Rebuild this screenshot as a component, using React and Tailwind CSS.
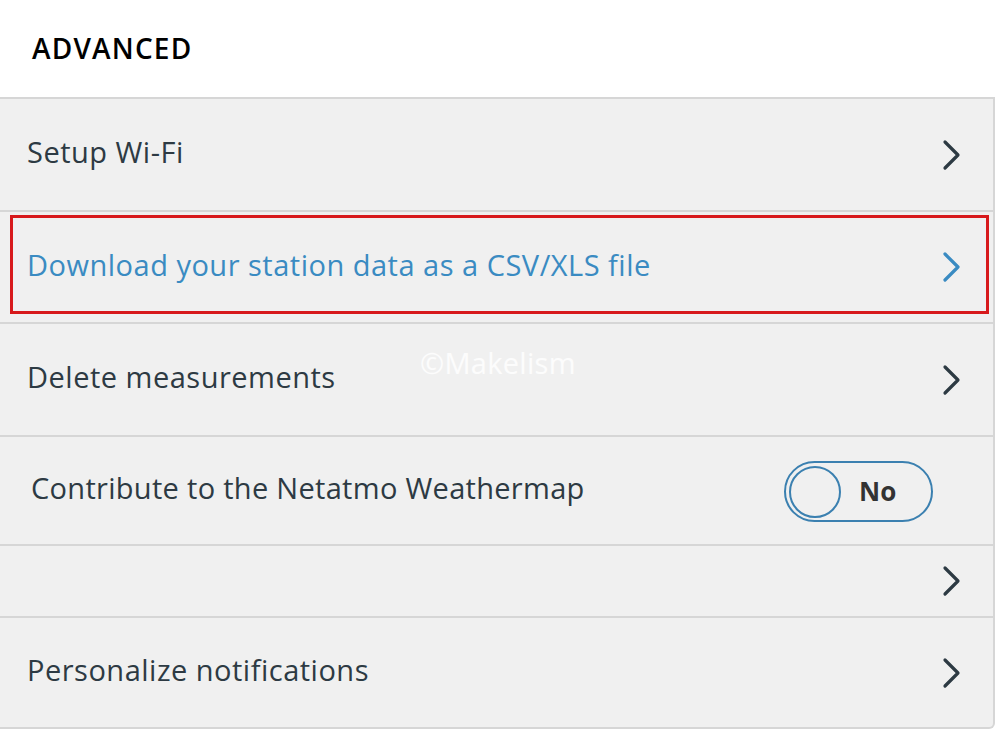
import React from "react";

const font = { fontFamily: "'Open Sans', 'Noto Sans', sans-serif" };

function Chevron({ color }) {
  return (
    <svg width="20" height="32" viewBox="0 0 20 32" className="shrink-0">
      <polyline points="3,3 16,16 3,29" fill="none" stroke={color} strokeWidth="3.2" strokeLinecap="round" strokeLinejoin="round" />
    </svg>
  );
}

function Row({ h, label, color = "text-[#2d3a43]", children, pl = "pl-[27px]" }) {
  return (
    <div className={`relative flex items-center justify-between border-b-2 border-[#d6d6d6] ${pl} pr-[31px] ${h}`}>
      <span className={`text-[29px] leading-none mb-[6px] tracking-[0.5px] ${color}`}>{label}</span>
      {children}
    </div>
  );
}

export default function App() {
  return (
    <div className="w-[996px] h-[730px] bg-white overflow-hidden" style={font}>
      <div className="h-[97px] flex items-center pl-[32px] pb-[2px]">
        <span className="text-[28px] font-semibold text-black tracking-[1.2px]">ADVANCED</span>
      </div>
      <div className="w-[995px] bg-[#f0f0f0] border-t-2 border-r-2 border-b-2 border-[#d6d6d6] rounded-br-[6px] relative">
        <Row h="h-[113px]" label="Setup Wi-Fi">
          <Chevron color="#2d3a43" />
        </Row>
        <Row h="h-[112px]" label="Download your station data as a CSV/XLS file" color="text-[#3a8bc2]">
          <Chevron color="#3a8bc2" />
          <div className="absolute left-[10px] top-[3px] w-[979px] h-[99px] border-[3px] border-[#d7191c] pointer-events-none" />
        </Row>
        <Row h="h-[113px]" label="Delete measurements">
          <Chevron color="#2d3a43" />
          <span className="absolute left-[420px] top-[17px] text-[29px] tracking-[0.3px] text-white/80" style={{ fontFamily: "'Open Sans', sans-serif" }}>©Makelism</span>
        </Row>
        <div className="flex items-center justify-between border-b-2 border-[#d6d6d6] pl-[31px] pr-[60px] h-[109px]">
          <span className="text-[29px] leading-none mb-[6px] tracking-[0.3px] text-[#2d3a43]">Contribute to the Netatmo Weathermap</span>
          <div className="w-[149px] h-[61px] rounded-full border-2 border-[#3b80b0] flex items-center pl-[3px] mt-[2px]">
            <div className="w-[52px] h-[52px] rounded-full border-2 border-[#3b80b0] bg-[#f0f0f0]" />
            <span className="ml-[18px] text-[26px] font-bold text-[#333]">No</span>
          </div>
        </div>
        <div className="flex items-center justify-end border-b-2 border-[#d6d6d6] pr-[31px] h-[72px]">
          <Chevron color="#2d3a43" />
        </div>
        <div className="flex items-center justify-between pl-[27px] pr-[31px] h-[109px]">
          <span className="text-[29px] leading-none mb-[6px] tracking-[0.5px] text-[#2d3a43]">Personalize notifications</span>
          <Chevron color="#2d3a43" />
        </div>
      </div>
    </div>
  );
}
